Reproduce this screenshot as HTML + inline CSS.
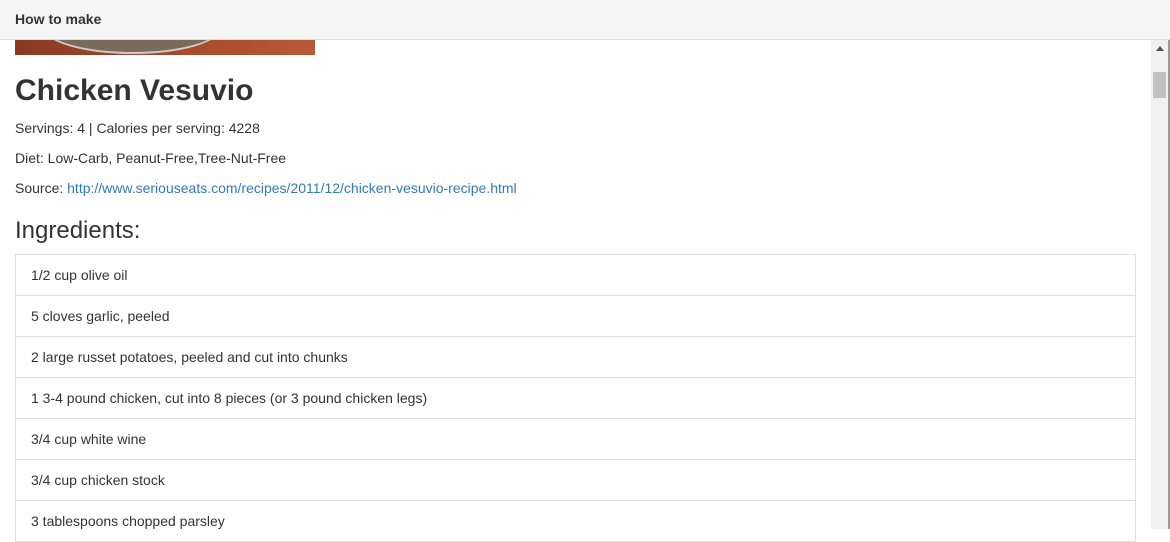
<!DOCTYPE html><html><head><style>
body{margin:0;width:1170px;height:529px;overflow:hidden;font-family:"Liberation Sans",sans-serif;color:#333;position:relative;background:#fff}
.hdr{position:absolute;left:0;top:0;width:1170px;height:39px;background:#f5f5f5;border-bottom:1px solid #ddd;z-index:2}
.hdr span{position:absolute;left:15px;top:11px;font-size:14px;font-weight:bold}
.img{position:absolute;left:15px;top:40px;width:300px;height:15px;background:linear-gradient(90deg,#8a3a22,#a5482a 50%,#b65a36);overflow:hidden}
.img div{position:absolute;left:28px;top:-40px;width:175px;height:50px;border-radius:50%;background:#7a6a5a;border:2px solid #ccc}
h1{position:absolute;left:15px;top:74px;margin:0;font-size:30px;font-weight:bold}
p{position:absolute;left:15px;margin:0;font-size:14px}
a{color:#337ab7;text-decoration:none}
h3{position:absolute;left:15px;top:217px;margin:0;font-size:24px;font-weight:normal}
ul{position:absolute;left:15px;top:254px;width:1121px;margin:0;padding:0;list-style:none}
li{height:40px;border:1px solid #ddd;border-top:none;box-sizing:content-box;padding-left:15px;line-height:40px;font-size:14px}
li:first-child{border-top:1px solid #ddd}
.sb{position:absolute;left:1151px;top:40px;width:17px;height:489px;background:#f1f1f1}
.sb .th{position:absolute;left:2px;top:32px;width:13px;height:26px;background:#c1c1c1}
.sb .ar{position:absolute;left:5px;top:6px;border-left:4px solid transparent;border-right:4px solid transparent;border-bottom:5px solid #505050}
.edge{position:absolute;left:1168px;top:0;width:2px;height:529px;background:#999}
</style></head><body>
<div class="hdr"><span>How to make</span></div>
<div class="img"><div></div></div>
<h1>Chicken Vesuvio</h1>
<p style="top:120px">Servings: 4 | Calories per serving: 4228</p>
<p style="top:150px">Diet: Low-Carb, Peanut-Free,Tree-Nut-Free</p>
<p style="top:180px">Source: <a>http://www.seriouseats.com/recipes/2011/12/chicken-vesuvio-recipe.html</a></p>
<h3>Ingredients:</h3>
<ul>
<li>1/2 cup olive oil</li>
<li>5 cloves garlic, peeled</li>
<li>2 large russet potatoes, peeled and cut into chunks</li>
<li>1 3-4 pound chicken, cut into 8 pieces (or 3 pound chicken legs)</li>
<li>3/4 cup white wine</li>
<li>3/4 cup chicken stock</li>
<li>3 tablespoons chopped parsley</li>
</ul>
<div class="sb"><div class="ar"></div><div class="th"></div></div>
<div class="edge"></div>
</body></html>
